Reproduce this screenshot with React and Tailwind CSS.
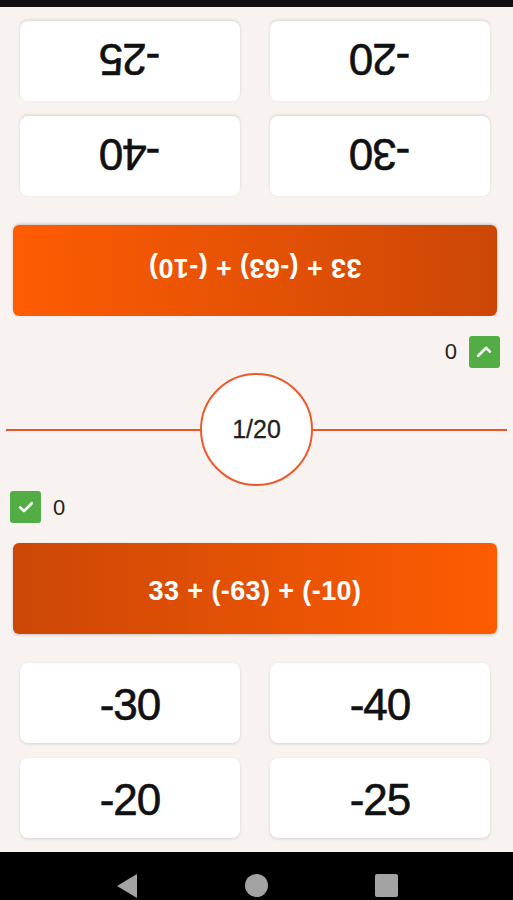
import React from "react";

function CheckBox() {
  return (
    <div className="w-[31px] h-8 rounded-[3px] bg-[#52ad45] flex items-center justify-center">
      <svg width="20" height="20" viewBox="0 0 24 24" fill="none" stroke="white" strokeWidth="3.2" strokeLinecap="round" strokeLinejoin="round">
        <path d="M5 12.5l4.5 4.5L19 7.5" />
      </svg>
    </div>
  );
}

function Card({ value }) {
  return (
    <div className="h-20 bg-white rounded-lg shadow-[0_1px_3px_rgba(0,0,0,0.14)] flex items-center justify-center pt-[3px]">
      <span className="text-[44px] leading-none text-[#111] tracking-[-1px] [-webkit-text-stroke:0.6px_#111]">{value}</span>
    </div>
  );
}

function Panel({ rotated }) {
  const wrap = rotated ? "flex flex-col h-[366px] rotate-180" : "flex flex-col h-[366px]";
  const checkRow = rotated
    ? "flex items-center gap-3 pl-[13px] h-8 mt-[5px]"
    : "flex items-center gap-3 pl-[10px] h-8 mt-[5px]";
  const banner = rotated
    ? "mt-5 ml-[16px] mr-[13px] h-[91px] rounded-md bg-linear-to-r from-[#cc4706] to-[#fe5c02] shadow-[0_1px_3px_rgba(0,0,0,0.2)] flex items-center justify-center pt-[6px]"
    : "mt-5 ml-[13px] mr-[16px] h-[91px] rounded-md bg-linear-to-r from-[#cc4706] to-[#fe5c02] shadow-[0_1px_3px_rgba(0,0,0,0.2)] flex items-center justify-center pt-[6px]";
  const grid = rotated
    ? "mt-[29px] grid grid-cols-2 gap-x-[30px] gap-y-[15px] pl-[23px] pr-5"
    : "mt-[29px] grid grid-cols-2 gap-x-[30px] gap-y-[15px] pl-5 pr-[23px]";
  return (
    <div className={wrap}>
      <div className={checkRow}>
        <CheckBox />
        <span className="text-[22px] text-[#222] leading-none pt-[2px]">0</span>
      </div>
      <div className={banner}>
        <span className="text-white font-bold text-[27px] leading-none tracking-[0.4px]">33 + (-63) + (-10)</span>
      </div>
      <div className={grid}>
        <Card value="-30" />
        <Card value="-40" />
        <Card value="-20" />
        <Card value="-25" />
      </div>
    </div>
  );
}

export default function App() {
  return (
    <div className="w-[513px] h-[900px] flex flex-col bg-[#f8f3f0] font-['Liberation_Sans',Arial,sans-serif] overflow-hidden">
      <div className="h-[7px] bg-[#111]" />
      <div className="flex-1 flex flex-col">
        <Panel rotated />
        <div className="h-[113px] flex items-center px-[6px]">
          <div className="flex-1 h-[2px] bg-[#e6582c]" />
          <div className="w-[113px] h-[113px] rounded-full border-2 border-[#ec5a2a] bg-white flex items-center justify-center">
            <span className="text-[25px] text-[#222] leading-none [-webkit-text-stroke:0.3px_#222]">1/20</span>
          </div>
          <div className="flex-1 h-[2px] bg-[#e6582c]" />
        </div>
        <Panel />
      </div>
      <div className="h-12 bg-black flex justify-center items-start pt-[22px] gap-[107px]">
        <svg width="22" height="24" viewBox="0 0 22 24">
          <polygon points="21,0 21,24 1,12" fill="#a3a3a3" />
        </svg>
        <svg width="23" height="23" viewBox="0 0 23 23">
          <circle cx="11.5" cy="11.5" r="11.5" fill="#a3a3a3" />
        </svg>
        <svg width="23" height="23" viewBox="0 0 23 23">
          <rect x="0" y="0" width="23" height="23" rx="2" fill="#a3a3a3" />
        </svg>
      </div>
    </div>
  );
}
